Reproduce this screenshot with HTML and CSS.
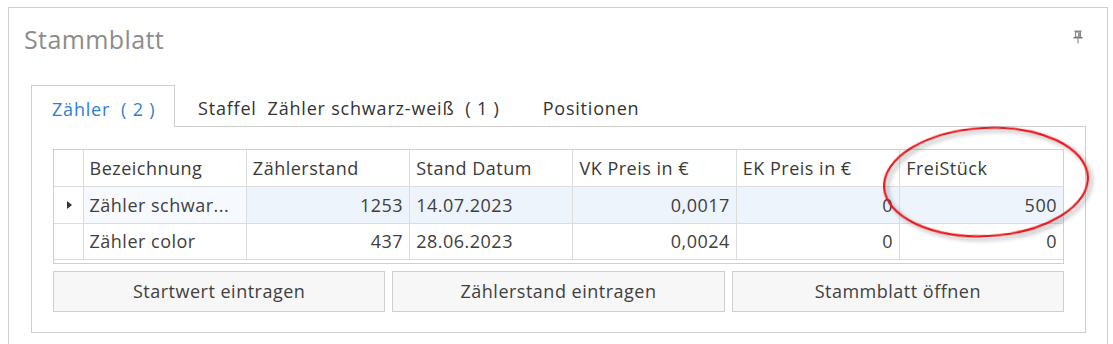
FILE: index.html
```html
<!DOCTYPE html>
<html>
<head>
    <link rel="stylesheet" href="styles.css">
</head>
<body>
    <div class="panel">
        <div class="panel-header">
            <h1 class="panel-title">Stammblatt</h1>
            <svg class="pin-icon" width="12" height="14" viewBox="0 0 12 14">
                <rect x="2.5" y="0.5" width="7" height="1.5" fill="#8a8a8a"/>
                <rect x="3.5" y="2" width="5" height="5" fill="none" stroke="#8a8a8a" stroke-width="1.2"/>
                <rect x="6" y="2.5" width="2" height="4.5" fill="#9a9a9a"/>
                <rect x="1.5" y="7" width="9" height="1.5" fill="#7a7a7a"/>
                <rect x="5.5" y="8.5" width="1" height="5" fill="#7a7a7a"/>
            </svg>
        </div>

        <div class="tabs">
            <div class="tab active">Zähler&nbsp; ( 2 )</div>
            <div class="tab">Staffel&nbsp; Zähler schwarz-weiß&nbsp; ( 1 )</div>
            <div class="tab">Positionen</div>
            <div class="tab-rest"></div>
        </div>

        <div class="tab-body">
            <div class="grid">
                <table>
                    <thead>
                        <tr>
                            <th class="sel"></th>
                            <th>Bezeichnung</th>
                            <th>Zählerstand</th>
                            <th>Stand Datum</th>
                            <th>VK Preis in €</th>
                            <th>EK Preis in €</th>
                            <th>FreiStück</th>
                        </tr>
                    </thead>
                    <tbody>
                        <tr class="current">
                            <td class="sel"><span class="arrow"></span></td>
                            <td class="name">Zähler schwar...</td>
                            <td class="num">1253</td>
                            <td>14.07.2023</td>
                            <td class="num">0,0017</td>
                            <td class="num">0</td>
                            <td class="num">500</td>
                        </tr>
                        <tr>
                            <td class="sel"></td>
                            <td class="name">Zähler color</td>
                            <td class="num">437</td>
                            <td>28.06.2023</td>
                            <td class="num">0,0024</td>
                            <td class="num">0</td>
                            <td class="num">0</td>
                        </tr>
                    </tbody>
                </table>
            </div>

            <div class="actions">
                <button>Startwert eintragen</button>
                <button>Zählerstand eintragen</button>
                <button>Stammblatt öffnen</button>
            </div>
        </div>
    </div>

    <!-- hand-drawn highlight around the FreiStück column -->
    <svg class="highlight" width="230" height="130" viewBox="0 0 230 130">
        <defs>
            <filter id="shade" x="-10%" y="-10%" width="130%" height="130%">
                <feDropShadow dx="3" dy="3" stdDeviation="2" flood-color="#000" flood-opacity="0.35"/>
            </filter>
        </defs>
        <ellipse cx="110" cy="60" rx="102" ry="54" transform="rotate(-3 110 60)"
                 fill="none" stroke="#e8141a" stroke-width="2.2" filter="url(#shade)"/>
    </svg>
</body>
</html>
```

FILE: styles.css
```css
* {
    box-sizing: border-box;
    margin: 0;
    padding: 0;
}

body {
    font-family: "Open Sans", "Noto Sans", sans-serif;
    color: #404040;
    background: white;
    height: 100vh;
    overflow: hidden;
    position: relative;
}

.panel {
    margin: 7px 5px 0 8px;
    height: 337px;
    border: 1px solid #cfcfcf;
    border-bottom: none;
    padding: 0 21px 0 22px;
}

.panel-header {
    display: flex;
    justify-content: space-between;
    align-items: flex-start;
    height: 77px;
    padding-top: 14px;
}

.panel-title {
    margin-left: -7px;
    font-size: 25px;
    line-height: 34px;
    font-weight: normal;
    color: #8c8c8c;
    letter-spacing: 0.4px;
}

.pin-icon {
    margin-top: 8px;
    margin-right: 2px;
}

.tabs {
    display: flex;
    height: 42px;
}

.tab {
    font-size: 18px;
    letter-spacing: 0.8px;
    white-space: nowrap;
    padding: 4px 19px 0 20px;
    display: flex;
    align-items: center;
    border-bottom: 1px solid #cfcfcf;
    color: #333;
}

.tab.active {
    width: 144px;
    padding-right: 0;
    color: #2e7fd4;
    border: 1px solid #cfcfcf;
    border-bottom: none;
}

.tab + .tab {
    padding-left: 23px;
}

.tab + .tab + .tab {
    padding-left: 24px;
}

.tab-rest {
    flex: 1;
    border-bottom: 1px solid #cfcfcf;
}

.tab-body {
    border: 1px solid #cfcfcf;
    border-top: none;
    height: 206px;
    padding: 22px 21px 21px 21px;
}

.grid {
    border: 1px solid #cfcfcf;
    padding-bottom: 3px;
}

table {
    width: 100%;
    border-collapse: collapse;
    table-layout: fixed;
    font-size: 18px;
    letter-spacing: 0.5px;
}

th, td {
    height: 36px;
    border: 1px solid #dcdcdc;
    padding: 0 6px;
    text-align: left;
    font-weight: normal;
    white-space: nowrap;
    overflow: hidden;
}

thead th {
    border-top: none;
    color: #3a3a3a;
}

tr > :first-child {
    border-left: none;
}

tr > :last-child {
    border-right: none;
}

tbody tr:first-child td {
    height: 37px;
}

.sel {
    width: 29px;
    background: white;
}

.num {
    text-align: right;
}

tr.current td {
    background: #edf4fc;
}

tr.current td.sel {
    background: white;
}

tr.current td.name {
    background: #f6f9fd;
}

.arrow {
    display: block;
    margin-left: 7px;
    width: 0;
    height: 0;
    border-top: 4px solid transparent;
    border-bottom: 4px solid transparent;
    border-left: 5px solid #333;
}

.actions {
    display: grid;
    grid-template-columns: 1fr 1fr 1fr;
    gap: 7px;
    margin-top: 7px;
}

button {
    height: 41px;
    font-family: inherit;
    font-size: 18px;
    letter-spacing: 0.5px;
    color: #404040;
    background: #f7f7f7;
    border: 1px solid #cfcfcf;
    border-radius: 0;
}

.highlight {
    position: absolute;
    left: 876px;
    top: 122px;
}
```
